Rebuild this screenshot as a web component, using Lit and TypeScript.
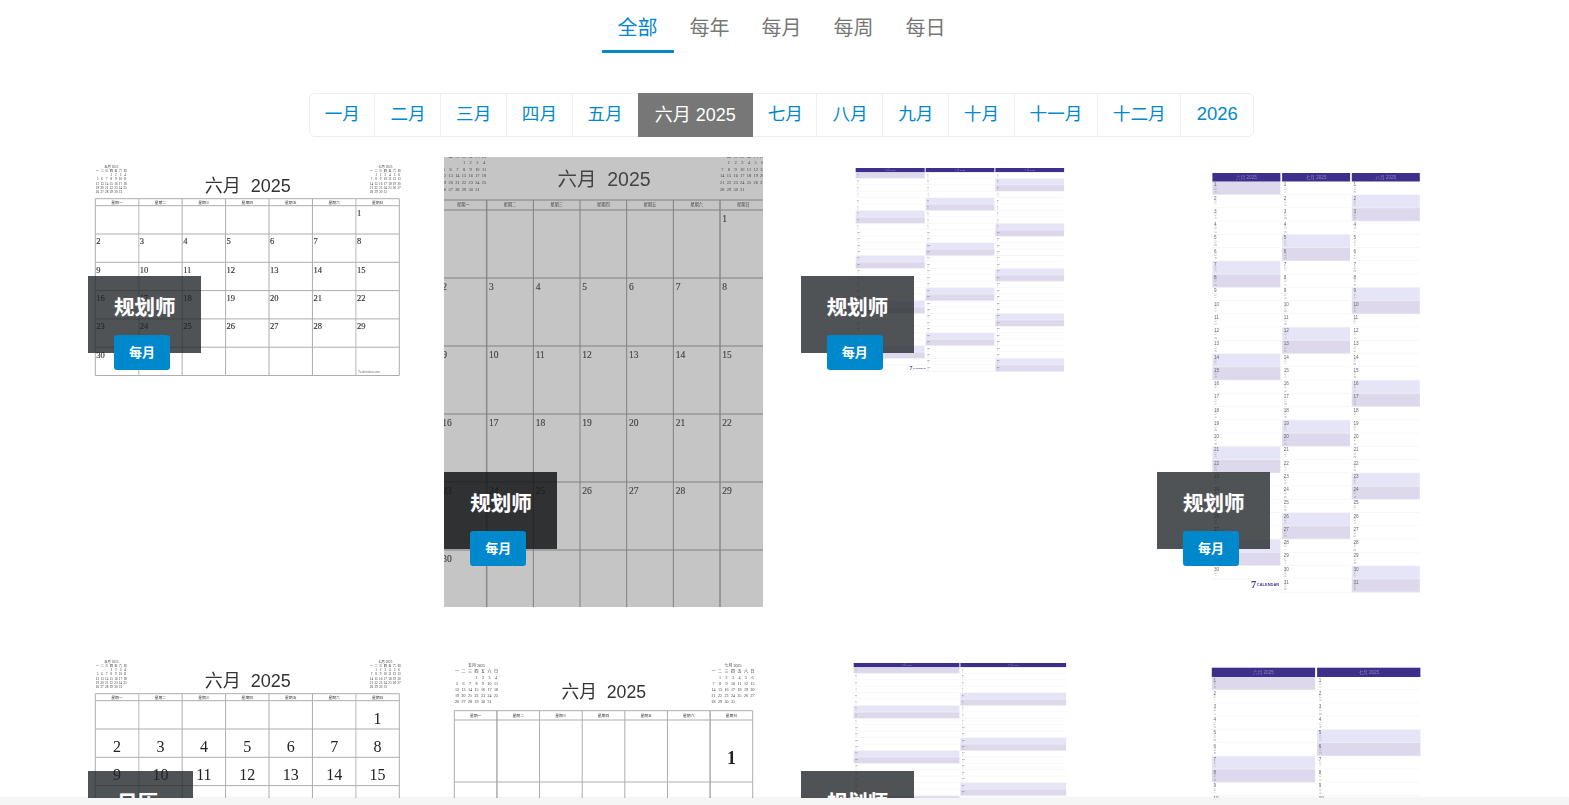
import { LitElement, html, css, svg } from "lit";
import { customElement } from "lit/decorators.js";

const WEEK = ["一", "二", "三", "四", "五", "六", "日"];
const MAY = [["", "", "", 1, 2, 3, 4], [5, 6, 7, 8, 9, 10, 11], [12, 13, 14, 15, 16, 17, 18], [19, 20, 21, 22, 23, 24, 25], [26, 27, 28, 29, 30, 31]];
const JULY = [["", 1, 2, 3, 4, 5, 6], [7, 8, 9, 10, 11, 12, 13], [14, 15, 16, 17, 18, 19, 20], [21, 22, 23, 24, 25, 26, 27], [28, 29, 30, 31]];
const JUNE = [["", "", "", "", "", "", 1], [2, 3, 4, 5, 6, 7, 8], [9, 10, 11, 12, 13, 14, 15], [16, 17, 18, 19, 20, 21, 22], [23, 24, 25, 26, 27, 28, 29], [30]];

interface Cal {
  h: number; bg: string; line: string; soft: string; ink: string;
  x0: number; colW: number; top: number; head: number; rowH: number;
  titleX: number; titleY: number; titleSize: number;
  miniL: number; miniR: number; miniY: number; miniDy: number; miniDx: number; miniSize: number;
  dateSize: number; center: boolean; dateDx: number; dateDy: number; dateWeight?: number; footer?: boolean;
}

function mini(x: number, c: Cal, title: string, rows: (number | string)[][]) {
  const { miniY: y, miniDy: dy, miniDx: dx, miniSize: s, ink } = c;
  return svg`
    <text x=${x + 3 * dx} y=${y - 2 * dy} font-size=${s} text-anchor="middle" fill=${ink} class="serif">${title}</text>
    ${WEEK.map((d, i) => svg`<text x=${x + i * dx} y=${y - dy} font-size=${s} text-anchor="middle" fill=${ink} class="serif">${d}</text>`)}
    ${rows.map((r, ri) => r.map((d, i) => svg`<text x=${x + i * dx} y=${y + ri * dy} font-size=${s} text-anchor="middle" fill=${ink} class="serif">${d}</text>`))}
  `;
}

function calendar(c: Cal) {
  const cols = Array.from({ length: 8 }, (_, i) => c.x0 + i * c.colW);
  const right = cols[7];
  const ys = Array.from({ length: 7 }, (_, i) => c.head + i * c.rowH);
  return svg`
    <rect width="319" height=${c.h} fill=${c.bg}></rect>
    ${mini(c.miniL, c, "五月 2025", MAY)}
    ${mini(c.miniR, c, "七月 2025", JULY)}
    <text x=${c.titleX} y=${c.titleY} font-size=${c.titleSize} text-anchor="middle" fill=${c.ink} class="sans" xml:space="preserve">六月  2025</text>
    ${cols.map((x, i) => svg`<line x1=${x} x2=${x} y1=${c.top} y2=${ys[6]} stroke=${i === 1 || i === 6 ? c.soft : c.line} stroke-width=${i === 1 || i === 6 ? 1.5 : 1}></line>`)}
    <line x1=${c.x0} x2=${right} y1=${c.top} y2=${c.top} stroke=${c.line} stroke-width="1"></line>
    ${ys.map((y) => svg`<line x1=${c.x0} x2=${right} y1=${y} y2=${y} stroke=${c.line} stroke-width="1"></line>`)}
    ${WEEK.map((d, i) => svg`<text x=${c.x0 + (i + 0.5) * c.colW} y=${(c.top + c.head) / 2 + 1.4} font-size=${c.colW > 45 ? 4.2 : 3.8} text-anchor="middle" fill=${c.ink} class="serif">星期${d}</text>`)}
    ${JUNE.map((r, ri) => r.map((d, i) => svg`<text
        x=${c.center ? c.x0 + (i + 0.5) * c.colW : c.x0 + i * c.colW + c.dateDx}
        y=${c.head + ri * c.rowH + c.dateDy}
        font-size=${c.dateSize}
        font-weight=${c.dateWeight ?? 400}
        text-anchor=${c.center ? "middle" : "start"}
        fill=${c.center ? "#222" : c.ink}
        stroke=${c.center ? "none" : c.ink}
        stroke-width="0.15"
        class="serif">${d}</text>`))}
    ${c.footer ? svg`<text x=${c.x0 + 6 * c.colW + 2} y=${c.head + 6 * c.rowH - 2.4} font-size="3.4" fill="#777" class="sans">7calendar.com</text>` : ""}
  `;
}

const OFF: Record<string, number[]> = {
  "六月": [1, 7, 8, 14, 15, 21, 22, 28, 29],
  "七月": [5, 6, 12, 13, 19, 20, 26, 27],
  "八月": [2, 3, 9, 10, 16, 17, 23, 24, 30, 31],
};
const DAYS: Record<string, number> = { "六月": 30, "七月": 31, "八月": 31 };
const START: Record<string, number> = { "六月": 6, "七月": 1, "八月": 4 };

interface Plan { dx: number; cols: [number, number][]; top: number; head: number; rowH: number; big: boolean; logo: [number, number, number]; }

function planner(p: Plan) {
  const months = ["六月", "七月", "八月"].slice(0, p.cols.length);
  return svg`<g transform="translate(${p.dx} 0)">
    ${months.map((m, mi) => {
      const [a, b] = p.cols[mi];
      const off = OFF[m];
      return svg`
        <rect x=${a} y=${p.top} width=${b - a} height=${p.head - p.top} fill="#3d2f8a"></rect>
        <text x=${(a + b) / 2} y=${p.head - (p.big ? 2.6 : 1.4)} font-size=${p.big ? 4.6 : 2.4} text-anchor="middle" fill="#8f88c6" class="sans">${m} 2025</text>
        ${Array.from({ length: DAYS[m] }, (_, i) => {
          const day = i + 1;
          const y = p.head + i * p.rowH;
          const wd = (START[m] + i) % 7;
          const fill = off.includes(day) ? (wd === 5 ? "#e5e5f7" : "#ddd8ec") : "#ffffff";
          return svg`
            <rect x=${a} y=${y} width=${b - a} height=${p.rowH} fill=${fill}></rect>
            <line x1=${a} x2=${b} y1=${y + p.rowH - 0.3} y2=${y + p.rowH - 0.3} stroke="#f1f1f5" stroke-width="0.7"></line>
            <text x=${a + 1.6} y=${y + (p.big ? 4.6 : 2.6)} font-size=${p.big ? 4.6 : 2.4} fill="#666" class="sans">${day}</text>
            ${p.big
              ? svg`<text x=${a + 1.8} y=${y + 7.9} font-size="2.8" fill="#999" class="sans">星</text>
                    <text x=${a + 1.8} y=${y + 11.2} font-size="2.8" fill="#aaa" class="sans">${WEEK[wd]}</text>`
              : svg`<text x=${a + 1.6} y=${y + 5.4} font-size="1.8" fill="#aaa" class="sans">星</text>`}
          `;
        })}
      `;
    })}
    <text x=${p.logo[0]} y=${p.logo[1]} font-size=${p.logo[2]} font-weight="700" fill="#4a3d8f" class="serif">7<tspan dx="0.5" dy=${-p.logo[2] * 0.12} font-size=${p.logo[2] * 0.38} class="sans">CALENDAR</tspan></text>
  </g>`;
}

const CARD1: Cal = {
  h: 226, bg: "#fff", line: "#adadad", soft: "#cfcfcf", ink: "#333",
  x0: 7.3, colW: 43.43, top: 41.7, head: 48.7, rowH: 28.3,
  titleX: 159.8, titleY: 34.7, titleSize: 18,
  miniL: 9.5, miniR: 283.5, miniY: 19, miniDy: 4.25, miniDx: 4.6, miniSize: 3.3,
  dateSize: 8.5, center: false, dateDx: 1, dateDy: 10.3, footer: true,
};
const CARD2: Cal = {
  h: 450, bg: "#c5c5c5", line: "#808080", soft: "#8a8a8a", ink: "#444",
  x0: -4, colW: 46.67, top: 43, head: 53, rowH: 68,
  titleX: 160, titleY: 28.5, titleSize: 19.5,
  miniL: 0, miniR: 278.3, miniY: 6.8, miniDy: 6.7, miniDx: 6.67, miniSize: 4.4,
  dateSize: 9.5, center: false, dateDx: 2.3, dateDy: 12,
};
const CARD5: Cal = { ...CARD1, center: true, dateSize: 16, dateDy: 23, footer: false };
const CARD6: Cal = {
  h: 450, bg: "#fff", line: "#adadad", soft: "#adadad", ink: "#333",
  x0: 10.3, colW: 42.63, top: 58.7, head: 68, rowH: 62,
  titleX: 159.8, titleY: 46, titleSize: 17.7,
  miniL: 13, miniR: 269.5, miniY: 26.5, miniDy: 6, miniDx: 6.5, miniSize: 4,
  dateSize: 18, center: true, dateDx: 0, dateDy: 43.5, dateWeight: 700,
};

const PLAN3: Plan = { dx: -0.6, cols: [[55.3, 124.3], [125.3, 194], [195, 263.7]], top: 11, head: 15.3, rowH: 6.43, big: false, logo: [109, 213, 6] };
const PLAN4: Plan = { dx: -0.9, cols: [[56.3, 124.3], [126, 194], [195.7, 263.7]], top: 16, head: 24.7, rowH: 13.25, big: true, logo: [95, 430.5, 10.5] };
const PLAN7: Plan = { dx: -0.6, cols: [[53.3, 159], [160, 265.7]], top: 11, head: 15.3, rowH: 6.43, big: false, logo: [140, 213, 6] };
const PLAN8: Plan = { dx: -0.9, cols: [[55.7, 159], [161, 264.3]], top: 15.7, head: 25, rowH: 13.2, big: true, logo: [130, 430, 10.5] };

interface Card { h: number; art: unknown; title: string; tag: string; top: number; narrow?: boolean; dim?: boolean; }

const CARDS: Card[] = [
  { h: 226, art: calendar(CARD1), title: "规划师", tag: "每月", top: 119 },
  { h: 450, art: calendar(CARD2), title: "规划师", tag: "每月", top: 315, dim: true },
  { h: 226, art: planner(PLAN3), title: "规划师", tag: "每月", top: 119 },
  { h: 450, art: planner(PLAN4), title: "规划师", tag: "每月", top: 315 },
  { h: 226, art: calendar(CARD5), title: "日历", tag: "每月", top: 119, narrow: true },
  { h: 450, art: calendar(CARD6), title: "日历", tag: "每月", top: 315, narrow: true },
  { h: 226, art: planner(PLAN7), title: "规划师", tag: "每月", top: 119 },
  { h: 450, art: planner(PLAN8), title: "规划师", tag: "每月", top: 315 },
];

const TABS = ["全部", "每年", "每月", "每周", "每日"];
const MONTHS = ["一月", "二月", "三月", "四月", "五月", "六月 2025", "七月", "八月", "九月", "十月", "十一月", "十二月", "2026"];

@customElement("app-root")
export class AppRoot extends LitElement {
  static styles = css`
    :host {
      display: block;
      height: 100vh;
      overflow: hidden;
      background: #fff;
      padding-right: 5px;
      box-sizing: border-box;
      font-family: "Liberation Sans", "Noto Sans CJK SC", sans-serif;
    }
    .tabs { display: flex; justify-content: center; height: 53px; padding-right: 1px; }
    .tab {
      width: 72px; box-sizing: border-box; height: 53px;
      display: flex; align-items: center; justify-content: center;
      font-size: 20px; color: #777; padding-top: 2px;
      border-bottom: 3px solid transparent;
    }
    .tab.on { color: #0088cc; border-bottom-color: #0088cc; }
    .pager-wrap { display: flex; justify-content: center; margin-top: 40px; padding-right: 1px; }
    .pager {
      display: flex; height: 44px; box-sizing: border-box;
      border: 1px solid #eee; border-radius: 6px;
    }
    .page {
      display: flex; align-items: center; padding: 0 15px 5px;
      font-size: 17.6px; color: #0088cc;
      border-left: 1px solid #eee; margin-left: -0.5px;
    }
    .page:first-child { border-left: 0; margin-left: 0; }
    .page.on {
      background: #777; color: #fff; border-left: 0;
      margin: -1px 0; padding: 0 17px 5px; font-size: 18px;
    }
    .page.on + .page { border-left: 0; padding-right: 14px; margin-left: 0; }
    .page.wide { padding: 0 15.5px 3px; font-size: 18.5px; }
    .grid {
      display: grid; grid-template-columns: repeat(4, 319px);
      column-gap: 37.33px; row-gap: 45px; justify-content: center;
      margin-top: 20px; align-items: start;
    }
    .card { position: relative; height: 450px; }
    .art { display: block; width: 319px; filter: blur(0.45px); }
    .sans { font-family: "Liberation Sans", "Noto Sans CJK SC", sans-serif; white-space: pre; }
    .serif { font-family: "Liberation Serif", "Noto Sans CJK SC", serif; }
    .over {
      position: absolute; left: 0; width: 113px; height: 77px;
      box-sizing: border-box; padding: 17px 0 0 26px;
      background: rgba(33, 37, 41, 0.79);
    }
    .over.dim { background: rgba(20, 22, 25, 0.85); }
    .over.narrow { width: 105px; padding-left: 29px; }
    .over h3 {
      margin: 0; font-size: 20.5px; line-height: 30px; height: 30px;
      font-weight: 700; color: #fff; white-space: nowrap;
      text-shadow: 0 0 1px rgba(255, 255, 255, 0.3);
    }
    .tag {
      display: flex; align-items: center; justify-content: center;
      margin-top: 12px; width: 56px; height: 35px; box-sizing: border-box;
      background: #0088cc; border-radius: 3px; color: #fff;
      font-size: 13px; font-weight: 700; padding-bottom: 2px;
    }
    .bar {
      position: fixed; left: 0; right: 0; bottom: 0; height: 7px;
      background: #f5f5f5; box-shadow: 0 -1px 2px rgba(0, 0, 0, 0.05);
    }
  `;

  render() {
    return html`
      <nav class="tabs">
        ${TABS.map((t, i) => html`<div class="tab ${i === 0 ? "on" : ""}">${t}</div>`)}
      </nav>
      <div class="pager-wrap">
        <div class="pager">
          ${MONTHS.map((m) => html`<div class="page ${m.includes(" ") ? "on" : ""} ${m === "2026" ? "wide" : ""}">${m}</div>`)}
        </div>
      </div>
      <section class="grid">
        ${CARDS.map((c) => html`
          <article class="card">
            <svg class="art" width="319" height=${c.h} viewBox="0 0 319 ${c.h}">${c.art}</svg>
            <div class="over ${c.narrow ? "narrow" : ""} ${c.dim ? "dim" : ""}" style="top:${c.top}px">
              <h3>${c.title}</h3>
              <div class="tag">${c.tag}</div>
            </div>
          </article>
        `)}
      </section>
      <div class="bar"></div>
    `;
  }
}
